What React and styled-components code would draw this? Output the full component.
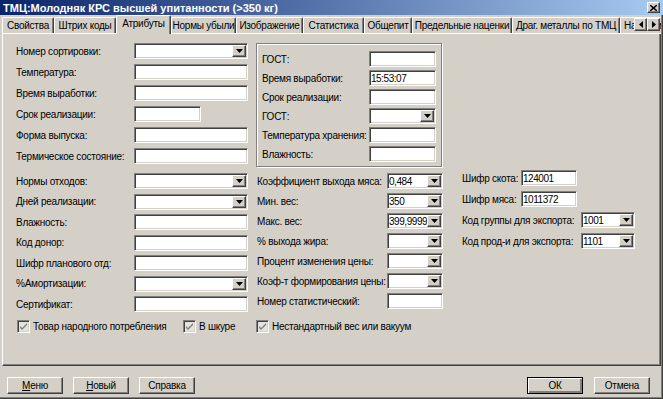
import React from 'react'
import styled, { createGlobalStyle } from 'styled-components'

const GlobalStyle = createGlobalStyle`
  html, body { margin: 0; padding: 0; background: #d4d0c8; }
  body {
    font-family: "Liberation Sans", Arial, sans-serif;
    font-size: 10px;
    letter-spacing: -0.25px;
    color: #000;
  }
`

const raised = `
  border-style: solid;
  border-width: 1px;
  border-color: #ffffff #404040 #404040 #ffffff;
  box-shadow: inset -1px -1px #808080;
`

const sunken = `
  border-style: solid;
  border-width: 1px;
  border-color: #808080 #ffffff #ffffff #808080;
  box-shadow: inset 1px 1px #404040, inset -1px -1px #d4d0c8;
`

const Window = styled.div`
  width: 663px;
  height: 399px;
  box-sizing: border-box;
  display: flex;
  flex-direction: column;
  background: #d4d0c8;
  box-shadow: inset -1px -1px #404040, inset -2px -2px #808080;
  overflow: hidden;
`

const TitleBar = styled.div`
  height: 15px;
  flex: none;
  display: flex;
  align-items: center;
  justify-content: space-between;
  padding: 0 3px 0 3px;
  background: linear-gradient(to right, #0a246a, #a6caf0);
  color: #fff;
  font-weight: bold;
  font-size: 11px;
  letter-spacing: 0;
`

const CloseButton = styled.div`
  width: 13px;
  height: 11px;
  box-sizing: border-box;
  background: #d4d0c8;
  display: flex;
  align-items: center;
  justify-content: center;
  ${raised}
`

const TabStrip = styled.div`
  height: 19px;
  flex: none;
  display: flex;
  align-items: flex-end;
  padding-left: 2px;
  margin-right: 2px;
  position: relative;
  overflow: hidden;
  &::after {
    content: '';
    position: absolute;
    left: 2px;
    right: 0;
    bottom: 0;
    height: 1px;
    background: #ffffff;
  }
`

const Tab = styled.div`
  flex: none;
  width: ${p => p.$w}px;
  height: ${p => (p.$active ? 19 : 16)}px;
  margin-bottom: ${p => (p.$active ? 0 : 1)}px;
  box-sizing: border-box;
  background: #d4d0c8;
  border-top: 1px solid #ffffff;
  border-left: 1px solid #ffffff;
  border-right: 1px solid #404040;
  border-radius: 2px 2px 0 0;
  box-shadow: inset -1px 0 #808080;
  text-align: ${p => (p.$clip ? 'left' : 'center')};
  padding-left: ${p => (p.$clip ? 3 : 0)}px;
  white-space: nowrap;
  overflow: hidden;
  line-height: 15px;
  position: relative;
  z-index: ${p => (p.$active ? 1 : 0)};
`

const Scroller = styled.div`
  position: absolute;
  right: 1px;
  top: 3px;
  display: flex;
  z-index: 2;
`

const ScrollButton = styled.div`
  width: 13px;
  height: 13px;
  box-sizing: border-box;
  background: #d4d0c8;
  display: flex;
  align-items: center;
  justify-content: center;
  ${raised}
`

const Panel = styled.div`
  height: 332px;
  flex: none;
  box-sizing: border-box;
  margin: 0 2px 0 2px;
  border-left: 1px solid #ffffff;
  border-right: 1px solid #404040;
  border-bottom: 1px solid #404040;
  box-shadow: inset -1px -1px #808080;
  padding: 9px 0 0 13px;
`

const Upper = styled.div`
  display: flex;
  align-items: flex-start;
  gap: 8px;
`

const Lower = styled.div`
  display: flex;
  align-items: flex-start;
  margin-top: 3px;
`

const Column = styled.div`
  width: ${p => p.$w}px;
  margin-left: ${p => p.$ml || 0}px;
  padding-top: ${p => p.$pt || 0}px;
  display: grid;
  grid-auto-rows: 16px;
  row-gap: ${p => p.$gap}px;
  flex: none;
`

const GroupBox = styled.div`
  width: 186px;
  box-sizing: border-box;
  border: 1px solid #808080;
  box-shadow: inset 1px 1px #ffffff, 1px 1px #ffffff;
  padding: 7px 0 4px 5px;
  display: grid;
  grid-auto-rows: 16px;
  row-gap: 3px;
`

const Row = styled.div`
  display: grid;
  grid-template-columns: ${p => p.$label}px auto;
  align-items: center;
  white-space: nowrap;
`

const Label = styled.span`
  white-space: nowrap;
`

const Field = styled.div`
  width: ${p => p.$w}px;
  height: 16px;
  box-sizing: border-box;
  background: #ffffff;
  display: flex;
  align-items: center;
  overflow: hidden;
  ${sunken}
`

const Value = styled.span`
  flex: 1;
  min-width: 0;
  padding-left: 1px;
  white-space: nowrap;
  overflow: hidden;
  letter-spacing: -0.45px;
`

const DropButton = styled.div`
  flex: none;
  width: 14px;
  height: 12px;
  margin: 1px 1px 1px 0;
  box-sizing: border-box;
  background: #d4d0c8;
  display: flex;
  align-items: center;
  justify-content: center;
  ${raised}
`

const Checks = styled.div`
  display: flex;
  align-items: center;
  height: 13px;
  margin-top: 8px;
  padding-left: 1px;
`

const CheckItem = styled.label`
  display: flex;
  align-items: center;
  gap: 3px;
  width: ${p => p.$w}px;
  flex: none;
  white-space: nowrap;
`

const CheckBox = styled.span`
  width: 13px;
  height: 13px;
  box-sizing: border-box;
  background: #e6e4de;
  display: flex;
  align-items: center;
  justify-content: center;
  ${sunken}
`

const Footer = styled.div`
  flex: 1;
  display: flex;
  align-items: flex-start;
  padding: 11px 13px 0 7px;
`

const ButtonGroup = styled.div`
  display: flex;
  gap: ${p => p.$gap}px;
  margin-left: ${p => (p.$right ? 'auto' : 0)};
`

const Button = styled.div`
  width: 56px;
  height: 17px;
  box-sizing: border-box;
  display: flex;
  align-items: center;
  justify-content: center;
  background: #d4d0c8;
  ${raised}
  ${p => p.$default && `
    border-color: #000;
    box-shadow: inset 1px 1px #ffffff, inset -2px -2px #808080, inset -1px -1px #404040;
  `}
`

const Arrow = () => (
  <svg width="7" height="4" viewBox="0 0 7 4">
    <polygon points="0,0 7,0 3.5,4" fill="#000" />
  </svg>
)

const Combo = ({ w, value }) => (
  <Field $w={w}>
    <Value>{value}</Value>
    <DropButton><Arrow /></DropButton>
  </Field>
)

const Input = ({ w, value }) => (
  <Field $w={w}>
    <Value>{value}</Value>
  </Field>
)

const FieldRow = ({ f, label, width }) => (
  <Row $label={f.lw || label}>
    <Label>{f.label}</Label>
    {f.combo
      ? <Combo w={f.w || width} value={f.value} />
      : <Input w={f.w || width} value={f.value} />}
  </Row>
)

const tabs = [
  ['Свойства', 52],
  ['Штрих коды', 62],
  ['Атрибуты', 55, true],
  ['Нормы убыли', 65],
  ['Изображение', 67],
  ['Статистика', 61],
  ['Общепит', 48],
  ['Предельные наценки', 100],
  ['Драг. металлы по ТМЦ', 108],
  ['Наценки', 60, false, true],
]

const upperLeft = [
  { label: 'Номер сортировки:', combo: true },
  { label: 'Температура:' },
  { label: 'Время выработки:' },
  { label: 'Срок реализации:', w: 67 },
  { label: 'Форма выпуска:' },
  { label: 'Термическое состояние:' },
]

const groupFields = [
  { label: 'ГОСТ:' },
  { label: 'Время выработки:', value: '15:53:07' },
  { label: 'Срок реализации:' },
  { label: 'ГОСТ:', combo: true },
  { label: 'Температура хранения:' },
  { label: 'Влажность:' },
]

const lowerLeft = [
  { label: 'Нормы отходов:', combo: true },
  { label: 'Дней реализации:', combo: true },
  { label: 'Влажность:' },
  { label: 'Код донор:' },
  { label: 'Шифр планового отд:' },
  { label: '%Амортизации:', combo: true },
  { label: 'Сертификат:' },
]

const middle = [
  { label: 'Коэффициент выхода мяса:', combo: true, value: '0,484' },
  { label: 'Мин. вес:', combo: true, value: '350' },
  { label: 'Макс. вес:', combo: true, value: '399,9999' },
  { label: '% выхода жира:', combo: true },
  { label: 'Процент изменения цены:', combo: true },
  { label: 'Коэф-т формирования цены:', combo: true },
  { label: 'Номер статистический:' },
]

const right = [
  { label: 'Шифр скота:', value: '124001', lw: 59, w: 56 },
  { label: 'Шифр мяса:', value: '1011372', lw: 59, w: 56 },
  { label: 'Код группы для экспорта:', value: '1001', combo: true, lw: 119, w: 54 },
  { label: 'Код прод-и для экспорта:', value: '1101', combo: true, lw: 119, w: 54 },
]

const Check = () => (
  <svg width="7" height="7" viewBox="0 0 7 7">
    <path d="M0 3 L2 5 L7 0 L7 2 L2 7 L0 5 Z" fill="#808080" />
  </svg>
)

export default function App() {
  return (
    <Window>
      <GlobalStyle />
      <TitleBar>
        <span>ТМЦ:Молодняк КРС высшей упитанности (&gt;350 кг)</span>
        <CloseButton>
          <svg width="7" height="6" viewBox="0 0 7 6">
            <path d="M0 0 L7 6 M7 0 L0 6" stroke="#000" strokeWidth="1.5" />
          </svg>
        </CloseButton>
      </TitleBar>

      <TabStrip>
        {tabs.map(([name, w, active, clip]) => (
          <Tab key={name} $w={w} $active={active} $clip={clip}>{name}</Tab>
        ))}
        <Scroller>
          <ScrollButton>
            <svg width="4" height="7" viewBox="0 0 4 7"><polygon points="4,0 4,7 0,3.5" fill="#000" /></svg>
          </ScrollButton>
          <ScrollButton>
            <svg width="4" height="7" viewBox="0 0 4 7"><polygon points="0,0 0,7 4,3.5" fill="#000" /></svg>
          </ScrollButton>
        </Scroller>
      </TabStrip>

      <Panel>
        <Upper>
          <Column $w={232} $gap={5}>
            {upperLeft.map((f, i) => <FieldRow key={i} f={f} label={118} width={114} />)}
          </Column>
          <GroupBox>
            {groupFields.map((f, i) => <FieldRow key={i} f={f} label={107} width={67} />)}
          </GroupBox>
        </Upper>

        <Lower>
          <Column $w={232} $gap={4.5} $pt={3}>
            {lowerLeft.map((f, i) => <FieldRow key={i} f={f} label={118} width={114} />)}
          </Column>
          <Column $w={186} $gap={4} $pt={3} $ml={9}>
            {middle.map((f, i) => <FieldRow key={i} f={f} label={130} width={56} />)}
          </Column>
          <Column $w={175} $gap={5} $ml={19}>
            {right.map((f, i) => <FieldRow key={i} f={f} label={59} width={56} />)}
          </Column>
        </Lower>

        <Checks>
          <CheckItem $w={166}><CheckBox><Check /></CheckBox>Товар народного потребления</CheckItem>
          <CheckItem $w={73}><CheckBox><Check /></CheckBox>В шкуре</CheckItem>
          <CheckItem $w={200}><CheckBox><Check /></CheckBox>Нестандартный вес или вакуум</CheckItem>
        </Checks>
      </Panel>

      <Footer>
        <ButtonGroup $gap={10}>
          <Button><u>М</u>еню</Button>
          <Button><u>Н</u>овый</Button>
          <Button>Справка</Button>
        </ButtonGroup>
        <ButtonGroup $gap={11} $right>
          <Button $default>ОК</Button>
          <Button>Отмена</Button>
        </ButtonGroup>
      </Footer>
    </Window>
  )
}
